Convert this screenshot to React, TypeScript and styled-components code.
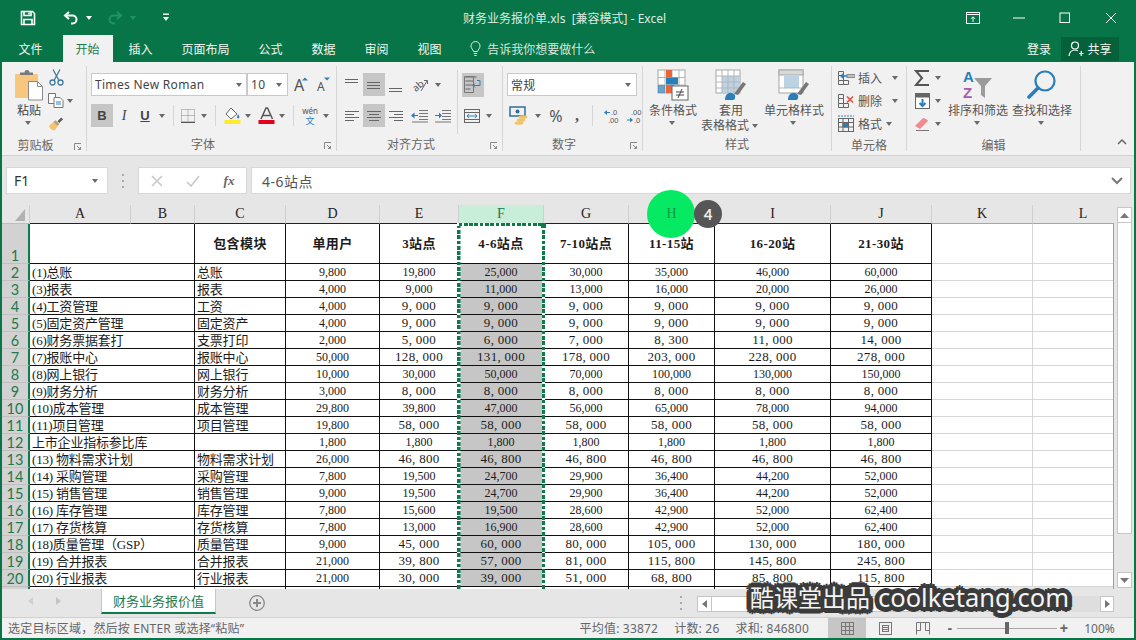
import React from "react";
import styled, { createGlobalStyle } from "styled-components";

const GREEN = "#077547";
const UI_FONT = '"Noto Sans", "Noto Sans CJK SC", sans-serif';
const SHEET_FONT = '"Liberation Serif", "Noto Sans CJK SC", serif';
const BLUE = "#2f80b5";

const GlobalStyle = createGlobalStyle`
  html, body { margin: 0; padding: 0; background: #f1f1f1; }
  * { box-sizing: border-box; }
`;

const Window = styled.div`
  position: relative;
  width: 1136px;
  height: 640px;
  overflow: hidden;
  display: flex;
  flex-direction: column;
  background: #f1f1f1;
  border: solid ${GREEN};
  border-width: 0 2px 2px;
  font-family: ${UI_FONT};
  font-size: 12px;
  color: #444;
`;

/* title bar */
const TitleBar = styled.div`
  height: 35px;
  flex: none;
  display: flex;
  align-items: center;
  margin: 0 -2px;
  padding-left: 14px;
  background: ${GREEN};
`;
const QuickBtn = styled.div<{ $w: number; $ml?: number }>`
  width: ${(p) => p.$w}px;
  margin-left: ${(p) => p.$ml || 0}px;
  height: 24px;
  display: flex;
  align-items: center;
  justify-content: center;
`;
const Title = styled.div`
  margin-left: 285px;
  color: #dcece4;
  font-size: 12px;
  white-space: pre;
`;
const WindowControls = styled.div`
  margin-left: auto;
  margin-right: 2px;
  display: flex;
`;
const WindowBtn = styled.div`
  width: 46px;
  height: 32px;
  display: flex;
  align-items: center;
  justify-content: center;
`;

/* ribbon tabs */
const TabRow = styled.div`
  height: 27px;
  flex: none;
  display: flex;
  align-items: stretch;
  margin: 0 -2px;
  padding-left: 4px;
  background: ${GREEN};
  color: #fff;
`;
const RibbonTab = styled.div<{ $active?: boolean }>`
  display: flex;
  align-items: center;
  padding: 0 ${(p) => (p.$active ? 13 : 14.5)}px;
  margin: 0 ${(p) => (p.$active ? 1.5 : 0)}px;
  font-size: 12px;
  background: ${(p) => (p.$active ? "#f1f1f1" : "transparent")};
  color: ${(p) => (p.$active ? "#1f7a4d" : "#f2f8f5")};
  &:first-child { margin-right: 4px; }
`;
const TellMe = styled.div`
  display: flex;
  align-items: center;
  gap: 6px;
  margin-left: 14px;
  color: #d5e8de;
`;
const AccountArea = styled.div`
  margin-left: auto;
  margin-right: 17px;
  display: flex;
  align-items: center;
  gap: 10px;
  color: #f2f8f5;
`;
const ShareBtn = styled.div`
  width: 58px;
  height: 24px;
  display: flex;
  align-items: center;
  justify-content: center;
  gap: 3px;
  background: #05613a;
`;

/* ribbon body */
const Ribbon = styled.div`
  position: relative;
  height: 94px;
  flex: none;
  display: flex;
  padding: 4px 0;
  background: #f1f1f1;
  border-bottom: 1px solid #d2d2d2;
`;
const Group = styled.div<{ $w: number }>`
  width: ${(p) => p.$w}px;
  flex: none;
  display: flex;
  flex-direction: column;
  border-right: 1px solid #d6d6d6;
`;
const GroupBody = styled.div<{ $pl?: number }>`
  flex: 1;
  display: flex;
  padding-left: ${(p) => p.$pl || 0}px;
`;
const GroupFoot = styled.div`
  height: 17px;
  padding-top: 3px;
  display: flex;
  align-items: center;
  color: #666;
  font-size: 12px;
`;
const FootText = styled.div`
  flex: 1;
  text-align: center;
`;
const Launcher = styled.div`
  width: 17px;
  padding-top: 4px;
  display: flex;
  justify-content: center;
`;
const Stack = styled.div<{ $pt?: number; $gap?: number }>`
  display: flex;
  flex-direction: column;
  padding-top: ${(p) => p.$pt ?? 7}px;
  gap: ${(p) => p.$gap ?? 8}px;
`;
const Line = styled.div<{ $h?: number }>`
  display: flex;
  align-items: center;
  height: ${(p) => p.$h || 23}px;
`;
const Tool = styled.div<{ $w?: number; $active?: boolean; $h?: number; $ml?: number }>`
  width: ${(p) => p.$w || 22}px;
  height: ${(p) => p.$h || 23}px;
  margin-left: ${(p) => p.$ml || 0}px;
  flex: none;
  display: flex;
  align-items: center;
  justify-content: center;
  background: ${(p) => (p.$active ? "#c6c6c6" : "transparent")};
  color: #555;
`;
const Caret = styled.i<{ $w?: number; $color?: string }>`
  width: ${(p) => p.$w || 14}px;
  height: 10px;
  flex: none;
  display: block;
  position: relative;
  &::after {
    content: "";
    position: absolute;
    left: 50%;
    top: 3px;
    margin-left: -3.5px;
    border: solid transparent;
    border-width: 4px 3.5px 0;
    border-top-color: ${(p) => p.$color || "#6a6a6a"};
  }
`;
const Divider = styled.div<{ $mx?: number }>`
  width: 1px;
  height: 21px;
  margin: 0 ${(p) => p.$mx ?? 4}px;
  flex: none;
  background: #d6d6d6;
`;
const TallDivider = styled(Divider)`
  height: 64px;
  margin-top: 4px;
`;
const Select = styled.div<{ $w: number }>`
  width: ${(p) => p.$w}px;
  height: 23px;
  flex: none;
  display: flex;
  align-items: center;
  justify-content: space-between;
  padding: 0 2px 0 3px;
  background: #fff;
  border: 1px solid #c9c9c9;
  font-size: 12px;
  color: #444;
  letter-spacing: 0.3px;
  white-space: nowrap;
`;
const LetterBold = styled.span`
  font: bold 13px "Liberation Sans", sans-serif;
  color: #444;
`;
const LetterItalic = styled.span`
  font: italic 14px "Liberation Serif", serif;
  color: #444;
`;
const LetterUnder = styled.span`
  font: bold 13px "Liberation Sans", sans-serif;
  text-decoration: underline;
  color: #444;
`;
const PasteColumn = styled.div`
  width: 46px;
  padding: 3px 0 0 8px;
  display: flex;
  flex-direction: column;
  align-items: center;
  color: #444;
  line-height: 15px;
`;
const BigButton = styled.div<{ $w: number; $ml?: number }>`
  width: ${(p) => p.$w}px;
  margin-left: ${(p) => p.$ml || 0}px;
  flex: none;
  display: flex;
  flex-direction: column;
  align-items: center;
  padding-top: 3px;
  color: #555;
  line-height: 15px;
  white-space: nowrap;
`;
const BigLabel = styled.div`
  margin-top: 2px;
  display: flex;
  flex-direction: column;
  align-items: center;
`;
const InlineLabel = styled.span`
  display: flex;
  align-items: center;
`;
const CellLine = styled.div`
  display: flex;
  align-items: center;
  height: 23px;
  padding-left: 5px;
  gap: 3px;
  color: #555;
  white-space: nowrap;
`;
const Collapse = styled.div`
  margin-left: auto;
  margin-right: 7px;
  align-self: flex-end;
  padding-bottom: 2px;
`;

/* formula bar */
const FormulaBar = styled.div`
  height: 49px;
  flex: none;
  display: flex;
  align-items: flex-start;
  padding: 11px 3px 0 4px;
  background: #e6e6e6;
`;
const NameBox = styled.div`
  width: 102px;
  height: 27px;
  display: flex;
  align-items: center;
  justify-content: space-between;
  padding: 0 7px;
  background: #fff;
  border: 1px solid #d8d8d8;
  font-size: 14px;
  color: #333;
`;
const GripDots = styled.div`
  width: 30px;
  height: 27px;
  display: flex;
  align-items: center;
  justify-content: center;
`;
const FormulaTools = styled.div`
  width: 109px;
  height: 27px;
  display: flex;
  align-items: center;
  background: #fff;
  border: 1px solid #d8d8d8;
`;
const FxLabel = styled.span`
  font: italic bold 13px "Liberation Serif", serif;
  color: #666;
`;
const FormulaInput = styled.div`
  flex: 1;
  height: 27px;
  margin-left: 4px;
  display: flex;
  align-items: center;
  justify-content: space-between;
  padding: 0 7px 0 10px;
  background: #fff;
  border: 1px solid #d8d8d8;
  font-size: 14px;
  color: #555;
  letter-spacing: 0.5px;
`;

/* sheet */
const SheetArea = styled.div`
  position: relative;
  height: 384px;
  flex: none;
  display: flex;
  background: #e6e6e6;
`;
const SheetGrid = styled.div`
  position: relative;
  width: 1112px;
  flex: none;
  overflow: hidden;
  display: grid;
  grid-template-columns: 28px 101px 64px 91px 94px 79px 85px 85px 86px 116px 101px 101px 101px;
  grid-template-rows: 19px 40px;
  grid-auto-rows: 17px;
  align-content: start;
  font-family: ${SHEET_FONT};
  font-size: 13px;
  color: #1c1c1c;
  &::after {
    content: "";
    position: absolute;
    right: 0;
    top: 18px;
    bottom: 0;
    width: 1px;
    background: #a0a0a0;
  }
`;
const Corner = styled.div`
  background: #e6e6e6;
  border-right: 1px solid #d0d0d0;
  border-bottom: 1px solid #bdbdbd;
  display: flex;
  align-items: flex-end;
  justify-content: flex-end;
  padding: 0 4px 2px 0;
`;
const ColHead = styled.div<{ $selected?: boolean; $plain?: boolean }>`
  display: flex;
  align-items: center;
  justify-content: center;
  font-size: 14px;
  background: ${(p) => (p.$selected ? "#c8eeda" : "#e6e6e6")};
  color: ${(p) => (p.$selected ? "#1b7a4a" : "#222")};
  border-right: 1px solid #cfcfcf;
  border-bottom: 1px solid ${(p) => (p.$plain ? "#a5a5a5" : "#222")};
`;
const HoverLetter = styled.span`
  position: relative;
  z-index: 4;
  color: #129a42;
`;
const RowHead = styled.div<{ $tall?: boolean }>`
  display: flex;
  align-items: ${(p) => (p.$tall ? "flex-end" : "center")};
  justify-content: center;
  font: 14.5px/15px Lato, "Noto Sans", sans-serif;
  color: #1d7a4c;
  background: #d2d2d2;
  border-right: 2px solid #0f7a4a;
  border-bottom: 1px solid #c0c0c0;
`;
const cellLines = `
  border-right: 1px solid #111;
  border-bottom: 1px solid #111;
`;
const TextCell = styled.div<{ $span?: boolean }>`
  ${cellLines}
  grid-column: span ${(p) => (p.$span ? 2 : 1)};
  display: flex;
  align-items: center;
  padding: 0 0 2px 2px;
  overflow: hidden;
  white-space: pre;
  letter-spacing: -0.2px;
  font-size: 13px;
  background: #fff;
`;
const HeaderCell = styled.div`
  ${cellLines}
  display: flex;
  align-items: center;
  justify-content: center;
  padding-bottom: 2px;
  font-weight: bold;
  font-size: 13px;
  letter-spacing: 0.4px;
  white-space: nowrap;
  background: #fff;
`;
const NumCell = styled.div<{ $wide?: boolean; $selected?: boolean }>`
  ${cellLines}
  display: flex;
  align-items: center;
  justify-content: center;
  white-space: pre;
  background: ${(p) => (p.$selected ? "#c6c6c6" : "#fff")};
  font-size: ${(p) => (p.$wide ? 13 : 12)}px;
  letter-spacing: ${(p) => (p.$wide ? 0.3 : 0)}px;
`;
const EmptyCell = styled.div`
  background: #fff;
  border-right: 1px solid #d6d6d6;
  border-bottom: 1px solid #d6d6d6;
`;
const Marquee = styled.div`
  position: absolute;
  left: 455px;
  top: 18px;
  bottom: 0;
  width: 88px;
  background:
    repeating-linear-gradient(to right, #fff 0 1.6px, #0d7a4b 1.6px 5.3px) left top / 100% 3px no-repeat,
    repeating-linear-gradient(to bottom, #fff 0 1.6px, #0d7a4b 1.6px 5.3px) left top / 3.5px 100% no-repeat,
    repeating-linear-gradient(to bottom, #fff 0 1.6px, #0d7a4b 1.6px 5.3px) right top / 3.5px 100% no-repeat;
  &::after {
    content: "";
    position: absolute;
    right: -1px;
    top: 0;
    width: 5px;
    height: 5px;
    background: #0d7a4b;
  }
`;
const VScroll = styled.div`
  width: 20px;
  flex: none;
  display: flex;
  flex-direction: column;
  padding: 2px 2px 1px 3px;
`;
const ScrollBtn = styled.div<{ $w?: number }>`
  height: 16px;
  width: ${(p) => (p.$w ? `${p.$w}px` : "auto")};
  flex: none;
  display: flex;
  align-items: center;
  justify-content: center;
  background: #fff;
  border: 1px solid #c6c6c6;
`;
const VThumb = styled.div`
  height: 311px;
  background: #fff;
  border: 1px solid #c6c6c6;
  border-top: 0;
`;
const PushEnd = styled.div`
  margin-top: auto;
`;

/* sheet tabs */
const SheetBar = styled.div`
  height: 28px;
  flex: none;
  display: flex;
  align-items: flex-start;
  background: #e6e6e6;
`;
const NavArrows = styled.div`
  width: 99px;
  height: 28px;
  padding: 0 0 4px 26px;
  display: flex;
  align-items: center;
  gap: 23px;
`;
const SheetTab = styled.div`
  width: 115px;
  height: 25px;
  display: flex;
  align-items: center;
  justify-content: center;
  background: #fff;
  color: #1f7a4d;
  font-size: 13px;
  border: 1px solid #c6c6c6;
  border-top: 0;
  border-bottom: 2px solid #0f7a4a;
`;
const AddSheet = styled.div`
  margin: 6px 0 0 33px;
  display: flex;
`;
const Grip = styled.div`
  margin: 7px 0 0 415px;
  display: flex;
`;
const HScroll = styled.div`
  margin: 7px 20px 0 15px;
  flex: 1;
  height: 16px;
  display: flex;
  background: #dedede;
`;
const HThumb = styled.div`
  width: 290px;
  background: #fff;
  border: 1px solid #c6c6c6;
  border-left: 0;
`;
const PushRight = styled.div`
  margin-left: auto;
`;

/* status bar */
const StatusBar = styled.div`
  height: 21px;
  flex: none;
  display: flex;
  align-items: center;
  padding: 0 6px;
  background: #f1f1f1;
  border-top: 1px solid #d0d0d0;
  color: #666;
  font-size: 12px;
  letter-spacing: 0.2px;
`;
const Stats = styled.div`
  margin-left: auto;
  margin-right: 19px;
  display: flex;
  gap: 16px;
`;
const ViewBtn = styled.div<{ $active?: boolean }>`
  width: 38px;
  height: 20px;
  display: flex;
  align-items: center;
  justify-content: center;
  background: ${(p) => (p.$active ? "#c6c6c6" : "transparent")};
`;
const ZoomSign = styled.div<{ $ml?: number }>`
  width: 14px;
  margin-left: ${(p) => p.$ml || 0}px;
  text-align: center;
  font: bold 14px/14px "Liberation Sans", sans-serif;
  color: #666;
`;
const ZoomTrack = styled.div`
  width: 100px;
  height: 16px;
  display: flex;
  align-items: center;
  justify-content: center;
  background: linear-gradient(#a8a8a8, #a8a8a8) center / 100% 1px no-repeat;
`;
const ZoomThumb = styled.div`
  width: 4px;
  height: 12px;
  background: #666;
`;
const ZoomLevel = styled.div`
  width: 57px;
  text-align: center;
  font-size: 12px;
  letter-spacing: 0;
`;

/* things lying over the sheet */
const Spot = styled.div`
  position: absolute;
  left: 645px;
  top: 190px;
  width: 48px;
  height: 48px;
  border-radius: 50%;
  background: #05ea62;
  z-index: 3;
`;
const StepBadge = styled.div`
  position: absolute;
  left: 692px;
  top: 200px;
  width: 28px;
  height: 28px;
  border-radius: 50%;
  background: #565656;
  color: #eee;
  font: bold 15px/28px Lato, sans-serif;
  text-align: center;
  z-index: 3;
`;
const outline = (() => {
  const parts: string[] = [];
  for (const r of [2, 4, 5]) {
    for (let a = 0; a < 360; a += 30) {
      const rad = (a * Math.PI) / 180;
      parts.push(`${(Math.cos(rad) * r).toFixed(1)}px ${(Math.sin(rad) * r).toFixed(1)}px 0 #3b3b3b`);
    }
  }
  return parts.join(", ");
})();
const Watermark = styled.div`
  position: absolute;
  left: 748px;
  top: 579px;
  height: 36px;
  display: flex;
  align-items: center;
  gap: 8px;
  color: #f4f4f4;
  text-shadow: ${outline};
  z-index: 5;
  white-space: nowrap;
`;
const WatermarkCn = styled.span`
  font: 24px/36px "Noto Sans CJK SC", sans-serif;
`;
const WatermarkEn = styled.span`
  font: 25.5px/36px "Noto Sans", sans-serif;
`;

/* drawings */
const SaveIcon = () => (
  <svg width="16" height="16" viewBox="0 0 16 16" fill="none" stroke="#fff" strokeWidth="1.6">
    <path d="M1.5 1.5h11l2 2v11h-13z" />
    <path d="M4 1.5v4h7v-4M4 14.5v-5h8v5" />
    <path d="M9 2.5v2" />
  </svg>
);
const UndoIcon = ({ color = "#fff" }: { color?: string }) => (
  <svg width="16" height="14" viewBox="0 0 16 14" fill="none" stroke={color} strokeWidth="2">
    <path d="M6 1 2 4.5 6 8" />
    <path d="M2 4.5h7.5a4 4 0 0 1 0 8H8" />
  </svg>
);
const RedoIcon = ({ color }: { color: string }) => (
  <svg width="16" height="14" viewBox="0 0 16 14" fill="none" stroke={color} strokeWidth="2">
    <path d="M10 1l4 3.5L10 8" />
    <path d="M14 4.5H6.5a4 4 0 0 0 0 8H8" />
  </svg>
);
const CustomizeIcon = () => (
  <svg width="8" height="9" viewBox="0 0 8 9">
    <rect x="1" y="0.5" width="6" height="1.4" fill="#fff" />
    <path d="M1 4h6L4 8z" fill="#fff" />
  </svg>
);
const RibbonDisplayIcon = () => (
  <svg width="14" height="12" viewBox="0 0 14 12" fill="none" stroke="#fff">
    <rect x="0.5" y="0.5" width="13" height="11" />
    <path d="M0.5 2.5h13M7 10V5M5 6.8 7 4.8l2 2" />
  </svg>
);
const MinimizeIcon = () => (
  <svg width="12" height="2" viewBox="0 0 12 2"><path d="M0 1h12" stroke="#fff" /></svg>
);
const MaximizeIcon = () => (
  <svg width="12" height="12" viewBox="0 0 12 12"><rect x="1" y="1" width="9.5" height="9.5" fill="none" stroke="#fff" /></svg>
);
const CloseIcon = () => (
  <svg width="12" height="12" viewBox="0 0 12 12"><path d="M1 1l10 10M11 1 1 11" stroke="#fff" /></svg>
);
const BulbIcon = () => (
  <svg width="11" height="15" viewBox="0 0 11 15" fill="none" stroke="#dceae3">
    <path d="M3.5 10.5C3 8.5 1 7.5 1 5a4.5 4.5 0 0 1 9 0c0 2.5-2 3.5-2.5 5.5z" />
    <path d="M3.8 12.5h3.4M4.3 14.5h2.4" />
  </svg>
);
const ShareIcon = () => (
  <svg width="16" height="16" viewBox="0 0 16 16" fill="none" stroke="#fff" strokeWidth="1.2">
    <circle cx="7" cy="4.5" r="3.5" />
    <path d="M1 15c.5-4 3-6 6-6 1 0 2 .3 2.8.8M11 12.5h4.5M13.2 10v5" />
  </svg>
);
const PasteIcon = () => (
  <svg width="30" height="32" viewBox="0 0 30 32">
    <rect x="1" y="5" width="23" height="24" rx="1" fill="#f8c77e" />
    <path d="M6 6V3.5h4.5a2.5 2.5 0 0 1 5 0H19V6z" fill="#7a7a7a" />
    <path d="M14.5 12.5h9l5 5v13.5h-14z" fill="#fff" stroke="#8a8a8a" />
    <path d="M23.5 12.5v5h5" fill="none" stroke="#8a8a8a" />
  </svg>
);
const CutIcon = () => (
  <svg width="15" height="17" viewBox="0 0 15 17" fill="none" stroke="#41799f" strokeWidth="1.3">
    <path d="M4 .5l6 11M11 .5 5 11.5" />
    <circle cx="3.5" cy="13.5" r="2.5" />
    <circle cx="11.5" cy="13.5" r="2.5" />
  </svg>
);
const CopyIcon = () => (
  <svg width="16" height="15" viewBox="0 0 16 15" fill="none">
    <path d="M.5.5h7v10h-7z" stroke="#777" fill="#fff" />
    <path d="M6 4.5h6l3 3v7H6z" fill="#fff" stroke="#777" />
    <path d="M8 9h5M8 11h5" stroke={BLUE} />
  </svg>
);
const BrushIcon = () => (
  <svg width="17" height="15" viewBox="0 0 17 15">
    <path d="M10 5l4-4 2 2-4 4z" fill="#5d5d5d" />
    <path d="M1 10l7-6 4 4-5 7c-3 0-5-2-6-5z" fill="#f6c26e" />
    <path d="M8 4l4 4-2 2-4-4z" fill="#8a8a8a" opacity=".6" />
  </svg>
);
const GrowFontIcon = ({ size, up }: { size: number; up: boolean }) => (
  <svg width="22" height="18" viewBox="0 0 22 18">
    <text x={up ? 6 : 7} y="15" fontFamily="Noto Sans" fontSize={size} fill="#555">A</text>
    {up ? <path d="M14 4.5l3-3 3 3z" fill={BLUE} /> : <path d="M14 1.5h6l-3 3z" fill={BLUE} />}
  </svg>
);
const BorderIcon = () => (
  <svg width="14" height="14" viewBox="0 0 14 14" fill="none" stroke="#888" strokeDasharray="1 1">
    <rect x="0.5" y="0.5" width="13" height="12" />
    <path d="M7 .5v12M.5 6.5h13" />
    <path d="M0 13.5h14" strokeDasharray="none" stroke="#555" />
  </svg>
);
const FillIcon = () => (
  <svg width="17" height="18" viewBox="0 0 17 18">
    <path d="M7 1 2 7l5 5 6-5z" fill="#fff" stroke="#666" />
    <path d="M14 7c1 2 2 3 1 4s-2 0-2-1z" fill={BLUE} />
    <rect x="0.5" y="13" width="16" height="4" fill="#ffeb2a" />
  </svg>
);
const FontColorIcon = () => (
  <svg width="17" height="18" viewBox="0 0 17 18">
    <path d="M3 12 8 1h1.5l5 11M5 8.5h7" fill="none" stroke="#555" strokeWidth="1.5" />
    <rect x="0.5" y="13" width="16" height="4" fill="#e3001b" />
  </svg>
);
const PhoneticIcon = () => (
  <svg width="18" height="20" viewBox="0 0 18 20">
    <text x="9" y="8" textAnchor="middle" fontFamily="Noto Sans" fontSize="8" fill="#555">wén</text>
    <text x="9" y="18" textAnchor="middle" fontFamily="Noto Sans CJK SC" fontSize="9" fill={BLUE}>文</text>
  </svg>
);
const LaunchIcon = () => (
  <svg width="8" height="8" viewBox="0 0 8 8" fill="none" stroke="#888">
    <path d="M.5 7V.5H7" />
    <path d="M3 3l3.5 3.5M6.5 4v2.5H4" />
  </svg>
);
const LinesIcon = ({ spans, y }: { spans: [number, number][]; y: number }) => (
  <svg width="15" height="18" viewBox="0 0 15 18" stroke="#666">
    {spans.map(([a, b], i) => (
      <path key={i} d={`M${a} ${y + i * 3 + 0.5}H${b}`} />
    ))}
  </svg>
);
const OrientIcon = () => (
  <svg width="18" height="18" viewBox="0 0 18 18">
    <text x="1" y="14" fontFamily="Noto Sans" fontSize="10" fill="#555" transform="rotate(-40 6 10)">ab</text>
    <path d="M10 15 16 5M13 4.5h3.5V8" fill="none" stroke="#666" />
  </svg>
);
const IndentIcon = ({ flip }: { flip?: boolean }) => (
  <svg width="17" height="14" viewBox="0 0 17 14">
    <path d="M8 1.5h9M8 4.5h9M8 7.5h9M8 10.5h9M1 13h16" stroke="#777" />
    <path d={flip ? "M1 6h4V3.5L8 6.5l-3 3V7H1z" : "M7 6H3.5V3.5L0 6.5l3.5 3V7H7z"} fill="#2a7fb8" />
  </svg>
);
const WrapIcon = () => (
  <svg width="18" height="18" viewBox="0 0 18 18" fill="none" stroke="#666">
    <path d="M1.5 1h11M1.5 5h8M1.5 9h8M1.5 13h5" />
    <path d="M.5.5h9v16H.5z" stroke="#777" />
    <path d="M13 4.5h3v5H9M11 7.5l-2 2 2 2" stroke={BLUE} />
  </svg>
);
const MergeIcon = () => (
  <svg width="16" height="14" viewBox="0 0 16 14" fill="none">
    <rect x="0.5" y="0.5" width="15" height="13" stroke="#666" />
    <path d="M.5 3.5h15M.5 10.5h15" stroke="#666" />
    <path d="M3 7h10M5 5 3 7l2 2M11 5l2 2-2 2" stroke={BLUE} />
  </svg>
);
const CurrencyIcon = () => (
  <svg width="20" height="20" viewBox="0 0 20 20">
    <rect x="1" y="1" width="15" height="9" fill="none" stroke="#2a6f9e" strokeWidth="1.5" />
    <circle cx="8.5" cy="5.5" r="2" fill="#2a6f9e" />
    <ellipse cx="14" cy="11" rx="4.5" ry="1.8" fill="#f0c36a" />
    <ellipse cx="12" cy="14" rx="4.5" ry="1.8" fill="#f0c36a" />
    <ellipse cx="10" cy="17" rx="4.5" ry="1.8" fill="#f0c36a" />
  </svg>
);
const PercentText = styled.span`
  font: 16px "Noto Sans", sans-serif;
  color: #555;
`;
const CommaText = styled.span`
  font: bold 16px/10px "Liberation Serif", serif;
  color: #555;
`;
const DecimalIcon = ({ more }: { more?: boolean }) => (
  <svg width="18" height="16" viewBox="0 0 18 16" fontFamily="Liberation Sans" fontSize="7.5" fill="#555">
    {more ? (
      <>
        <text x="7" y="6.5">.0</text>
        <text x="4" y="14.5">.00</text>
        <path d="M6 4H3V2L0 4.5 3 7V5h3z" fill={BLUE} />
      </>
    ) : (
      <>
        <text x="5" y="6.5">.00</text>
        <text x="8" y="14.5">.0</text>
        <path d="M1 11.5h3V9.5l3 2.5-3 2.5v-2H1z" fill={BLUE} />
      </>
    )}
  </svg>
);
const CondFormatIcon = () => (
  <svg width="32" height="32" viewBox="0 0 32 32">
    <rect x="1" y="1" width="27" height="23" fill="#fff" stroke="#a5a5a5" />
    <path d="M1 8.5h27M1 16h27M8 1v23M15 1v23M22 1v23" stroke="#b5b5b5" />
    <rect x="9" y="1" width="6" height="7" fill="#e8663c" />
    <rect x="9" y="8.5" width="12" height="7" fill="#2a7fb8" />
    <rect x="9" y="16" width="8" height="8" fill="#e8663c" />
    <rect x="1" y="16" width="7" height="8" fill="#2a7fb8" opacity=".7" />
    <rect x="15" y="17" width="16" height="14" fill="#fff" stroke="#666" />
    <path d="M19 23h8M19 26h8M25 20l-4 9" stroke="#444" />
  </svg>
);
const TableFormatIcon = () => (
  <svg width="32" height="32" viewBox="0 0 32 32">
    <rect x="1" y="1" width="24" height="23" fill="#fff" stroke="#a5a5a5" />
    <rect x="7" y="7" width="18" height="17" fill="#bcd3e3" />
    <path d="M1 7h24M1 13h24M1 19h24M7 1v23M13 1v23M19 1v23" stroke="#b5b5b5" />
    <path d="M19 25 28 13l3 2-8 11z" fill="#777" />
    <path d="M10 31c0-5 3-8 7-7 2 1 4 2 3 5 0 1-1 2-2 2z" fill="#2a7fb8" />
  </svg>
);
const CellStyleIcon = () => (
  <svg width="32" height="32" viewBox="0 0 32 32">
    <rect x="1" y="1" width="24" height="23" fill="#fff" stroke="#a5a5a5" />
    <rect x="1" y="1" width="24" height="5" fill="#d9d9d9" stroke="#a5a5a5" />
    <rect x="6" y="7" width="15" height="12" fill="#bcd3e3" />
    <path d="M1 19h24" stroke="#b5b5b5" />
    <path d="M19 25 28 13l3 2-8 11z" fill="#777" />
    <path d="M10 31c0-5 3-8 7-7 2 1 4 2 3 5 0 1-1 2-2 2z" fill="#2a7fb8" />
  </svg>
);
const InsertCellsIcon = () => (
  <svg width="18" height="16" viewBox="0 0 18 16" fill="none" stroke="#666">
    <path d="M1.5 1.5h5v4h-5zM1.5 5.5v5h5v-5M1.5 10.5v4h5v-4M6.5 10.5h5v4h-5z" />
    <rect x="10" y="4.5" width="8" height="3" fill="#c2c2c2" stroke="#8a8a8a" />
    <path d="M10 6H4M6 4 4 6l2 2" stroke={BLUE} strokeWidth="1.4" />
  </svg>
);
const DeleteCellsIcon = () => (
  <svg width="18" height="16" viewBox="0 0 18 16" fill="none" stroke="#666">
    <path d="M1.5 1.5h5v4h-5zM1.5 5.5v5h5v-5M1.5 10.5v4h5v-4M6.5 10.5h5v4h-5z" />
    <path d="M10 3.5l6 6M16 3.5l-6 6" stroke="#e5543a" strokeWidth="1.7" />
  </svg>
);
const FormatCellsIcon = () => (
  <svg width="18" height="18" viewBox="0 0 18 18" fill="none" stroke="#666">
    <rect x="1.5" y="3.5" width="15" height="13" />
    <path d="M1.5 7.5h15M1.5 12h15M6 3.5v13M11.5 3.5v13" />
    <rect x="6" y="7.5" width="5.5" height="4.5" fill="#2a7fb8" />
    <path d="M1 1h16" stroke={BLUE} strokeWidth="1.2" strokeDasharray="2 1" />
  </svg>
);
const SumIcon = () => (
  <svg width="16" height="16" viewBox="0 0 16 16" fill="none" stroke="#555" strokeWidth="2">
    <path d="M15 1H2l6 7-6 7h13" />
  </svg>
);
const FillDownIcon = () => (
  <svg width="15" height="16" viewBox="0 0 15 16">
    <rect x="0.5" y="0.5" width="14" height="15" fill="#fff" stroke="#666" />
    <rect x="0.5" y="0.5" width="14" height="4" fill="#666" />
    <path d="M7.5 6v7M4.5 10l3 3 3-3" fill="none" stroke="#2a7fb8" strokeWidth="2" />
  </svg>
);
const EraserIcon = () => (
  <svg width="15" height="15" viewBox="0 0 15 15">
    <path d="M0 10l8-8c1 0 5 2 5 3l-8 8z" fill="#f08a8e" />
    <path d="M1 14.5h13" stroke="#777" />
  </svg>
);
const SortIcon = () => (
  <svg width="32" height="32" viewBox="0 0 32 32" fontFamily="Liberation Sans" fontWeight="bold" fontSize="15">
    <text x="1" y="13" fill="#2a7fb8">A</text>
    <text x="1" y="29" fill="#a35bb0">Z</text>
    <path d="M12 9h18l-7 8v12l-4-3v-9z" fill="#9b9b9b" />
  </svg>
);
const FindIcon = () => (
  <svg width="30" height="32" viewBox="0 0 30 32" fill="none" stroke="#2a7fb8">
    <circle cx="18" cy="12" r="9.5" strokeWidth="2.2" />
    <path d="M11 19 2 28" strokeWidth="3.6" strokeLinecap="round" />
  </svg>
);
const ChevronDown = ({ color = "#777" }: { color?: string }) => (
  <svg width="12" height="8" viewBox="0 0 12 8" fill="none" stroke={color} strokeWidth="2">
    <path d="M1 1l5 5 5-5" />
  </svg>
);
const CollapseIcon = () => (
  <svg width="10" height="6" viewBox="0 0 10 6" fill="none" stroke="#666" strokeWidth="1.5">
    <path d="M1 5l4-4 4 4" />
  </svg>
);
const GripIcon = () => (
  <svg width="2" height="14" viewBox="0 0 2 14" fill="#aaa">
    <rect y="0" width="2" height="2" /><rect y="6" width="2" height="2" /><rect y="12" width="2" height="2" />
  </svg>
);
const CancelIcon = () => (
  <svg width="12" height="12" viewBox="0 0 12 12"><path d="M1 1l10 10M11 1 1 11" stroke="#c8c8c8" strokeWidth="1.6" /></svg>
);
const EnterIcon = () => (
  <svg width="14" height="12" viewBox="0 0 14 12"><path d="M1 7l4 4 8-10" fill="none" stroke="#c8c8c8" strokeWidth="1.6" /></svg>
);
const CornerIcon = () => (
  <svg width="10" height="12" viewBox="0 0 10 12"><path d="M10 0v12H0z" fill="#b2b2b2" /></svg>
);
const ArrowLeft = ({ color = "#777" }: { color?: string }) => (
  <svg width="5" height="8" viewBox="0 0 5 8"><path d="M5 0v8L0 4z" fill={color} /></svg>
);
const ArrowRight = ({ color = "#777" }: { color?: string }) => (
  <svg width="5" height="8" viewBox="0 0 5 8"><path d="M0 0v8l5-4z" fill={color} /></svg>
);
const ArrowUp = () => (
  <svg width="9" height="5" viewBox="0 0 9 5"><path d="M0 5h9L4.5 0z" fill="#777" /></svg>
);
const ArrowDown = () => (
  <svg width="9" height="5" viewBox="0 0 9 5"><path d="M0 0h9L4.5 5z" fill="#777" /></svg>
);
const AddIcon = () => (
  <svg width="16" height="16" viewBox="0 0 16 16" fill="none" stroke="#888" strokeWidth="1.3">
    <circle cx="8" cy="8" r="7.3" />
    <path d="M8 4v8M4 8h8" strokeWidth="2" />
  </svg>
);
const NormalViewIcon = () => (
  <svg width="13" height="13" viewBox="0 0 13 13" fill="none" stroke="#777">
    <rect x="0.5" y="0.5" width="12" height="12" />
    <path d="M4.5.5v12M8.5.5v12M.5 4.5h12M.5 8.5h12" />
  </svg>
);
const PageViewIcon = () => (
  <svg width="13" height="13" viewBox="0 0 13 13" fill="none" stroke="#777">
    <rect x="0.5" y="0.5" width="12" height="12" />
    <rect x="3.5" y="3.5" width="6" height="6" />
    <path d="M3.5 5.5h6M3.5 7.5h6" />
  </svg>
);
const BreakViewIcon = () => (
  <svg width="14" height="13" viewBox="0 0 14 13" fill="none" stroke="#777">
    <path d="M.5 12.5V.5h13v12M.5 8.5h4v-8M9.5.5v8h4" />
  </svg>
);

const names = [
  "(1)总账|总账",
  "(3)报表|报表",
  "(4)工资管理|工资",
  "(5)固定资产管理|固定资产",
  "(6)财务票据套打|支票打印",
  "(7)报账中心|报账中心",
  "(8)网上银行|网上银行",
  "(9)财务分析|财务分析",
  "(10)成本管理|成本管理",
  "(11)项目管理|项目管理",
  "上市企业指标参比库|",
  "(13) 物料需求计划|物料需求计划",
  "(14) 采购管理|采购管理",
  "(15) 销售管理|销售管理",
  "(16) 库存管理|库存管理",
  "(17) 存货核算|存货核算",
  "(18)质量管理（GSP）|质量管理",
  "(19) 合并报表|合并报表",
  "(20) 行业报表|行业报表",
];
const figures = [
  "9,800 19,800 25,000 30,000 35,000 46,000 60,000",
  "4,000 9,000 11,000 13,000 16,000 20,000 26,000",
  "4,000 9,_000 9,_000 9,_000 9,_000 9,_000 9,_000",
  "4,000 9,_000 9,_000 9,_000 9,_000 9,_000 9,_000",
  "2,000 5,_000 6,_000 7,_000 8,_300 11,_000 14,_000",
  "50,000 128,_000 131,_000 178,_000 203,_000 228,_000 278,_000",
  "10,000 30,000 50,000 70,000 100,000 130,000 150,000",
  "3,000 8,_000 8,_000 8,_000 8,_000 8,_000 8,_000",
  "29,800 39,800 47,000 56,000 65,000 78,000 94,000",
  "19,800 58,_000 58,_000 58,_000 58,_000 58,_000 58,_000",
  "1,800 1,800 1,800 1,800 1,800 1,800 1,800",
  "26,000 46,_800 46,_800 46,_800 46,_800 46,_800 46,_800",
  "7,800 19,500 24,700 29,900 36,400 44,200 52,000",
  "9,000 19,500 24,700 29,900 36,400 44,200 52,000",
  "7,800 15,600 19,500 28,600 42,900 52,000 62,400",
  "7,800 13,000 16,900 28,600 42,900 52,000 62,400",
  "9,000 45,_000 60,_000 80,_000 105,_000 130,_000 180,_000",
  "21,000 39,_800 57,_000 81,_000 115,_800 145,_800 245,_800",
  "21,000 30,_000 39,_000 51,_000 68,_800 85,_800 115,_800",
];
const columns = ["A", "B", "C", "D", "E", "F", "G", "H", "I", "J", "K", "L"];
const headers = ["包含模块", "单用户", "3站点", "4-6站点", "7-10站点", "11-15站", "16-20站", "21-30站"];
const ribbonTabs = ["文件", "开始", "插入", "页面布局", "公式", "数据", "审阅", "视图"];

const Foot = ({ text, launch }: { text: string; launch?: boolean }) => (
  <GroupFoot>
    <FootText>{text}</FootText>
    {launch && (
      <Launcher>
        <LaunchIcon />
      </Launcher>
    )}
  </GroupFoot>
);

const Sheet = () => (
  <SheetGrid>
    <Corner>
      <CornerIcon />
    </Corner>
    {columns.map((c) => (
      <ColHead key={c} $selected={c === "F"} $plain={c === "K" || c === "L"}>
        {c === "H" ? <HoverLetter>H</HoverLetter> : c}
      </ColHead>
    ))}
    <RowHead $tall>1</RowHead>
    <TextCell $span />
    {headers.map((h) => (
      <HeaderCell key={h}>{h}</HeaderCell>
    ))}
    <EmptyCell />
    <EmptyCell />
    {names.map((row, i) => {
      const [label, module] = row.split("|");
      return (
        <React.Fragment key={label}>
          <RowHead>{i + 2}</RowHead>
          <TextCell $span>{label}</TextCell>
          <TextCell>{module}</TextCell>
          {figures[i].split(" ").map((v, j) => (
            <NumCell key={j} $wide={v.includes("_")} $selected={j === 2}>
              {v.replace("_", " ")}
            </NumCell>
          ))}
          <EmptyCell />
          <EmptyCell />
        </React.Fragment>
      );
    })}
    <RowHead />
    <TextCell $span />
    {Array.from({ length: 8 }).map((_, i) => (
      <TextCell key={i} />
    ))}
    <Marquee />
  </SheetGrid>
);

export default function App() {
  return (
    <>
      <GlobalStyle />
      <Window>
        <TitleBar>
          <QuickBtn $w={28}><SaveIcon /></QuickBtn>
          <QuickBtn $w={24} $ml={17}><UndoIcon /></QuickBtn>
          <QuickBtn $w={12}><Caret $w={12} $color="#fff" /></QuickBtn>
          <QuickBtn $w={24} $ml={8}><RedoIcon color="#1f9468" /></QuickBtn>
          <QuickBtn $w={12}><Caret $w={12} $color="#1f9468" /></QuickBtn>
          <QuickBtn $w={24} $ml={15}><CustomizeIcon /></QuickBtn>
          <Title>财务业务报价单.xls  [兼容模式] - Excel</Title>
          <WindowControls>
            <WindowBtn><RibbonDisplayIcon /></WindowBtn>
            <WindowBtn><MinimizeIcon /></WindowBtn>
            <WindowBtn><MaximizeIcon /></WindowBtn>
            <WindowBtn><CloseIcon /></WindowBtn>
          </WindowControls>
        </TitleBar>

        <TabRow>
          {ribbonTabs.map((t) => (
            <RibbonTab key={t} $active={t === "开始"}>{t}</RibbonTab>
          ))}
          <TellMe><BulbIcon />告诉我你想要做什么</TellMe>
          <AccountArea>
            登录
            <ShareBtn><ShareIcon />共享</ShareBtn>
          </AccountArea>
        </TabRow>

        <Ribbon>
          <Group $w={85}>
            <GroupBody>
              <PasteColumn>
                <PasteIcon />
                <BigLabel>
                  粘贴
                  <Caret />
                </BigLabel>
              </PasteColumn>
              <Stack $pt={0} $gap={0}>
                <Line><Tool $w={16}><CutIcon /></Tool></Line>
                <Line><Tool $w={16}><CopyIcon /></Tool><Caret $w={12} /></Line>
                <Line><Tool $w={16}><BrushIcon /></Tool></Line>
              </Stack>
            </GroupBody>
            <Foot text="剪贴板" launch />
          </Group>

          <Group $w={250}>
            <GroupBody $pl={4}>
              <Stack>
                <Line>
                  <Select $w={156}>Times New Roman<Caret $w={10} /></Select>
                  <Select $w={41}>10<Caret $w={12} /></Select>
                  <Tool $w={22}><GrowFontIcon size={16} up /></Tool>
                  <Tool $w={22}><GrowFontIcon size={12} up={false} /></Tool>
                </Line>
                <Line>
                  <Tool $active><LetterBold>B</LetterBold></Tool>
                  <Tool><LetterItalic>I</LetterItalic></Tool>
                  <Tool $w={20}><LetterUnder>U</LetterUnder></Tool>
                  <Caret />
                  <Divider />
                  <Tool $w={18} $ml={1}><BorderIcon /></Tool>
                  <Caret />
                  <Divider />
                  <Tool $w={18} $ml={3}><FillIcon /></Tool>
                  <Caret />
                  <Tool $w={18} $ml={2}><FontColorIcon /></Tool>
                  <Caret />
                  <Divider />
                  <Tool $w={18} $ml={3}><PhoneticIcon /></Tool>
                  <Caret />
                </Line>
              </Stack>
            </GroupBody>
            <Foot text="字体" launch />
          </Group>

          <Group $w={166}>
            <GroupBody $pl={4}>
              <Stack>
                <Line>
                  <Tool><LinesIcon spans={[[0, 13], [0, 13]]} y={3} /></Tool>
                  <Tool $active><LinesIcon spans={[[0, 13], [0, 13], [0, 13]]} y={6} /></Tool>
                  <Tool $w={23}><LinesIcon spans={[[0, 13], [0, 13]]} y={12} /></Tool>
                  <Tool $w={24}><OrientIcon /></Tool>
                  <Caret $w={12} />
                </Line>
                <Line>
                  <Tool><LinesIcon spans={[[0, 14], [0, 9], [0, 14], [0, 9]]} y={4} /></Tool>
                  <Tool $active><LinesIcon spans={[[0, 14], [2, 12], [0, 14], [2, 12]]} y={4} /></Tool>
                  <Tool $w={23}><LinesIcon spans={[[0, 14], [5, 14], [0, 14], [5, 14]]} y={4} /></Tool>
                  <Tool $w={23}><IndentIcon /></Tool>
                  <Tool><IndentIcon flip /></Tool>
                </Line>
              </Stack>
              <TallDivider $mx={4} />
              <Stack $pt={7}>
                <Line $h={24}>
                  <Tool $active $h={24}><WrapIcon /></Tool>
                </Line>
                <Line $h={22}>
                  <Tool $w={20}><MergeIcon /></Tool>
                  <Caret />
                </Line>
              </Stack>
            </GroupBody>
            <Foot text="对齐方式" launch />
          </Group>

          <Group $w={140}>
            <GroupBody $pl={4}>
              <Stack>
                <Line><Select $w={130}>常规<Caret $w={12} /></Select></Line>
                <Line>
                  <Tool $w={24}><CurrencyIcon /></Tool>
                  <Caret />
                  <Tool $w={22}><PercentText>%</PercentText></Tool>
                  <Tool $w={20}><CommaText>,</CommaText></Tool>
                  <Divider $mx={5} />
                  <Tool $w={22} $ml={4}><DecimalIcon more /></Tool>
                  <Tool $w={22}><DecimalIcon /></Tool>
                </Line>
              </Stack>
            </GroupBody>
            <Foot text="数字" launch />
          </Group>

          <Group $w={189}>
            <GroupBody $pl={2}>
              <BigButton $w={56}>
                <CondFormatIcon />
                <BigLabel>条件格式<Caret /></BigLabel>
              </BigButton>
              <BigButton $w={60}>
                <TableFormatIcon />
                <BigLabel>
                  套用
                  <InlineLabel>表格格式<Caret $w={12} /></InlineLabel>
                </BigLabel>
              </BigButton>
              <BigButton $w={66}>
                <CellStyleIcon />
                <BigLabel>单元格样式<Caret /></BigLabel>
              </BigButton>
            </GroupBody>
            <Foot text="样式" />
          </Group>

          <Group $w={75}>
            <GroupBody>
              <Stack $pt={0} $gap={0}>
                <CellLine><InsertCellsIcon />插入<Caret $w={20} /></CellLine>
                <CellLine><DeleteCellsIcon />删除<Caret $w={20} /></CellLine>
                <CellLine><FormatCellsIcon />格式<Caret $w={8} /></CellLine>
              </Stack>
            </GroupBody>
            <Foot text="单元格" />
          </Group>

          <Group $w={174}>
            <GroupBody $pl={6}>
              <Stack $pt={0} $gap={0}>
                <Line><Tool $w={18}><SumIcon /></Tool><Caret /></Line>
                <Line><Tool $w={18}><FillDownIcon /></Tool><Caret /></Line>
                <Line><Tool $w={18}><EraserIcon /></Tool><Caret /></Line>
              </Stack>
              <BigButton $w={62} $ml={2}>
                <SortIcon />
                <BigLabel>排序和筛选<Caret /></BigLabel>
              </BigButton>
              <BigButton $w={66}>
                <FindIcon />
                <BigLabel>查找和选择<Caret /></BigLabel>
              </BigButton>
            </GroupBody>
            <Foot text="编辑" />
          </Group>
          <Collapse><CollapseIcon /></Collapse>
        </Ribbon>

        <FormulaBar>
          <NameBox>F1<Caret $w={10} /></NameBox>
          <GripDots><GripIcon /></GripDots>
          <FormulaTools>
            <Tool $w={36}><CancelIcon /></Tool>
            <Tool $w={36}><EnterIcon /></Tool>
            <Tool $w={36}><FxLabel>fx</FxLabel></Tool>
          </FormulaTools>
          <FormulaInput>4-6站点<ChevronDown /></FormulaInput>
        </FormulaBar>

        <SheetArea>
          <Sheet />
          <VScroll>
            <ScrollBtn><ArrowUp /></ScrollBtn>
            <VThumb />
            <PushEnd><ScrollBtn><ArrowDown /></ScrollBtn></PushEnd>
          </VScroll>
        </SheetArea>

        <SheetBar>
          <NavArrows>
            <ArrowLeft color="#d0d0d0" />
            <ArrowRight color="#c4c4c4" />
          </NavArrows>
          <SheetTab>财务业务报价值</SheetTab>
          <AddSheet><AddIcon /></AddSheet>
          <Grip><GripIcon /></Grip>
          <HScroll>
            <ScrollBtn $w={15}><ArrowLeft /></ScrollBtn>
            <HThumb />
            <PushRight><ScrollBtn $w={14}><ArrowRight /></ScrollBtn></PushRight>
          </HScroll>
        </SheetBar>

        <StatusBar>
          选定目标区域，然后按 ENTER 或选择“粘贴”
          <Stats>
            <span>平均值: 33872</span>
            <span>计数: 26</span>
            <span>求和: 846800</span>
          </Stats>
          <ViewBtn $active><NormalViewIcon /></ViewBtn>
          <ViewBtn><PageViewIcon /></ViewBtn>
          <ViewBtn><BreakViewIcon /></ViewBtn>
          <ZoomSign $ml={1}>-</ZoomSign>
          <ZoomTrack><ZoomThumb /></ZoomTrack>
          <ZoomSign>+</ZoomSign>
          <ZoomLevel>100%</ZoomLevel>
        </StatusBar>

        <Spot />
        <StepBadge>4</StepBadge>
        <Watermark>
          <WatermarkCn>酷课堂出品</WatermarkCn>
          <WatermarkEn>coolketang.com</WatermarkEn>
        </Watermark>
      </Window>
    </>
  );
}
